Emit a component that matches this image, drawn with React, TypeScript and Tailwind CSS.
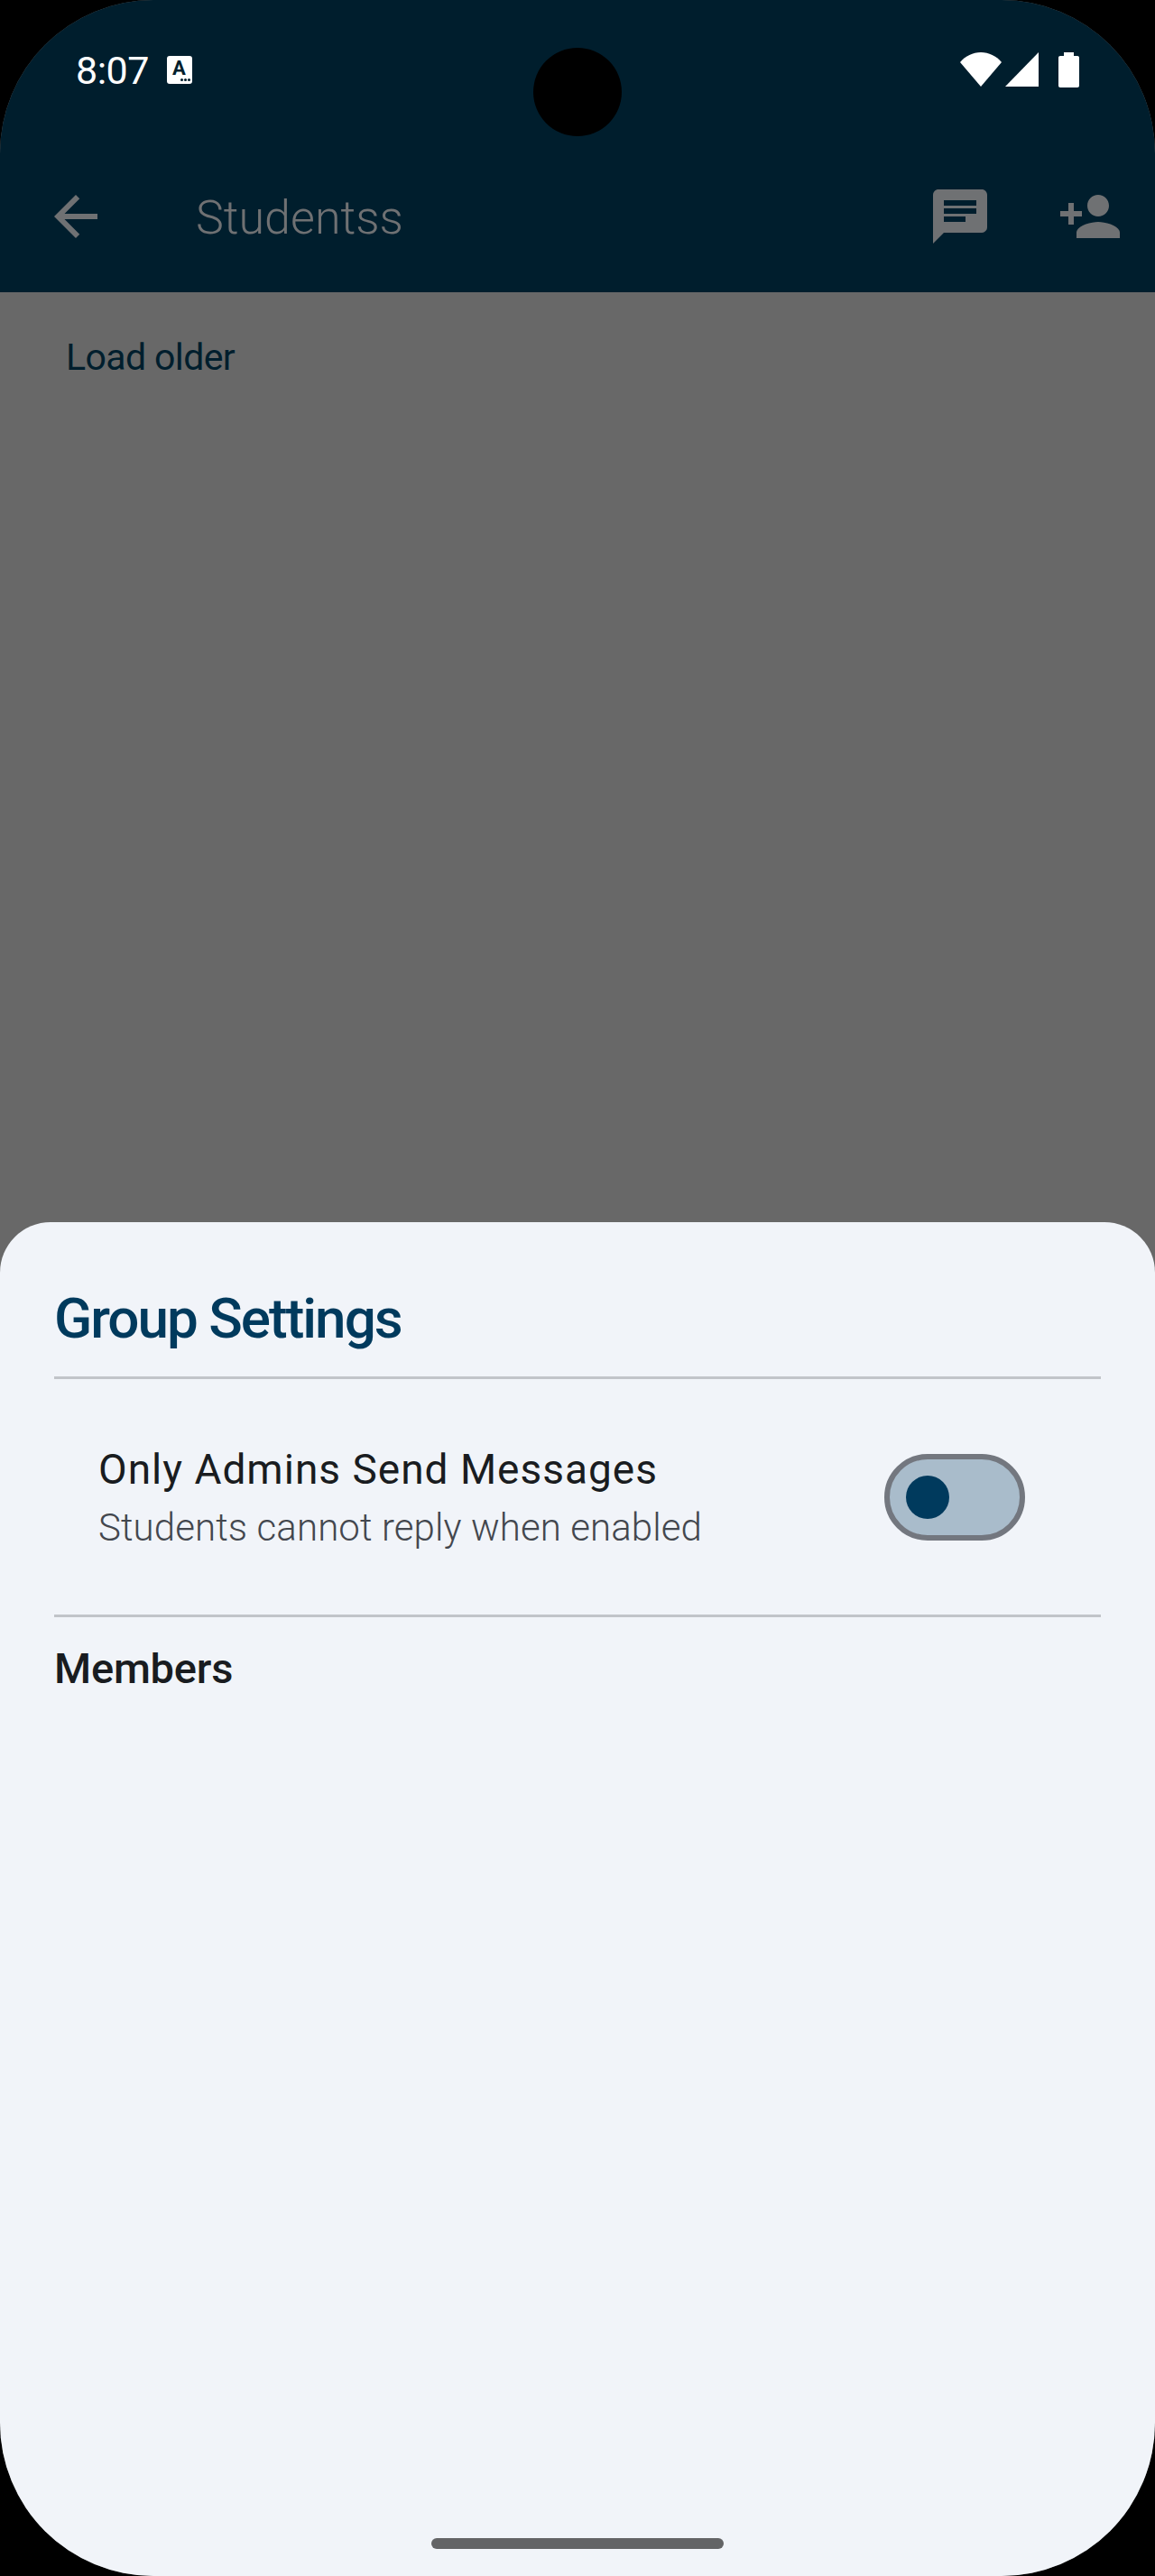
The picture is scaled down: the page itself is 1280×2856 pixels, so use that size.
const font = "[font-family:Roboto,'Noto_Sans',sans-serif]"

function Wifi() {
  return (
    <svg width="46" height="38" viewBox="0 0 46 38" className="fill-white">
      <path d="M23 38 0 11C6 4 14 0 23 0s17 4 23 11L23 38Z" />
    </svg>
  )
}

function Signal() {
  return (
    <svg width="37" height="38" viewBox="0 0 37 38" className="fill-white">
      <path d="M37 0v38H0L37 0Z" />
    </svg>
  )
}

function Battery() {
  return (
    <svg width="23" height="39" viewBox="0 0 23 39" className="fill-white">
      <path d="M6 0h11v4h4c1.200 0 2 .8 2 2v31c0 1.200-.8 2-2 2H2c-1.200 0-2-.8-2-2V6c0-1.200.8-2 2-2h4V0Z" />
    </svg>
  )
}

function ChatIcon() {
  return (
    <svg width="72" height="72" viewBox="0 0 24 24" className="fill-[#6f7173]">
      <path d="M20 2H4c-1.100 0-1.990.9-1.990 2L2 22l4-4h14c1.100 0 2-.9 2-2V4c0-1.100-.9-2-2-2zM6 9h12v2H6V9zm8 5H6v-2h8v2zm4-6H6V6h12v2z" />
    </svg>
  )
}

function PersonAddIcon() {
  return (
    <svg width="72" height="72" viewBox="0 0 24 24" className="fill-[#6f7173]">
      <path d="M15 12c2.210 0 4-1.790 4-4s-1.790-4-4-4-4 1.790-4 4 1.790 4 4 4zm-9-2V7H4v3H1v2h3v3h2v-3h3v-2H6zm9 4c-2.670 0-8 1.340-8 4v2h16v-2c0-2.660-5.330-4-8-4z" />
    </svg>
  )
}

function BackIcon() {
  return (
    <svg width="72" height="72" viewBox="0 0 24 24" className="fill-[#6f7173]">
      <path d="M20 11H7.830l5.590-5.590L12 4l-8 8 8 8 1.410-1.410L7.830 13H20v-2z" />
    </svg>
  )
}

function Toggle() {
  return (
    <div className="flex h-[96px] w-[156px] items-center rounded-full border-[6px] border-[#73777f] bg-[#a9bccb] pl-[18px]">
      <div className="h-[48px] w-[48px] rounded-full bg-[#003a5d]" />
    </div>
  )
}

export default function App() {
  return (
    <div className="h-[2856px] w-[1280px] bg-black">
      <div className={`relative flex h-full flex-col overflow-hidden rounded-[170px] bg-[#686868] ${font}`}>
        {/* camera cutout */}
        <div className="absolute left-[591px] top-[53px] h-[98px] w-[98px] rounded-full bg-black" />

        <header className="h-[324px] shrink-0 bg-[#001e2d]">
          <div className="flex h-[154px] items-center justify-between px-[84px]">
            <div className="flex items-center gap-[20px]">
              <span className="mt-[3px] text-[43px] leading-none tracking-[-0.5px] text-white">8:07</span>
              <div className="relative h-[31px] w-[28px] rounded-[3px] bg-white pl-[6px]">
                <span className="text-[22px] font-bold leading-[27px] text-[#001e2d]">A</span>
                <div className="absolute bottom-[3px] right-[2px] flex gap-[1px]">
                  <div className="h-[3px] w-[3px] rounded-full bg-[#001e2d]" />
                  <div className="h-[3px] w-[3px] rounded-full bg-[#001e2d]" />
                  <div className="h-[3px] w-[3px] rounded-full bg-[#001e2d]" />
                </div>
              </div>
            </div>
            <div className="flex items-center">
              <Wifi />
              <div className="ml-[4px]"><Signal /></div>
              <div className="ml-[22px]"><Battery /></div>
            </div>
          </div>
          <div className="flex h-[172px] items-center pl-[48px] pr-[36px]">
            <BackIcon />
            <span className="ml-[97px] mt-[4px] text-[52px] font-light leading-none text-[#6f7173]">Studentss</span>
            <div className="ml-auto flex gap-[72px]">
              <ChatIcon />
              <PersonAddIcon />
            </div>
          </div>
        </header>

        <div className="h-[1031px] shrink-0 pl-[73px] pt-[42px]">
          <span className="text-[41px] leading-[60px] tracking-[-0.6px] text-[#001e2d]">Load older</span>
        </div>

        <section className="relative flex-1 rounded-t-[56px] bg-[#f1f4f9] px-[60px]">
          <div className="flex h-[174px] items-end border-b-[3px] border-[#c1c4c9] pb-[29px]">
            <h2 className="text-[62px] font-medium leading-[70px] tracking-[-2px] text-[#003a5d]">Group Settings</h2>
          </div>
          <div className="flex h-[264px] items-center justify-between border-b-[3px] border-[#c1c4c9] pl-[49px] pr-[84px]">
            <div>
              <p className="text-[46px] leading-[60px] tracking-[1px] text-[#191c20]">Only Admins Send Messages</p>
              <p className="mt-[8px] text-[42px] font-light leading-[54px] tracking-[0.1px] text-[#43474e]">Students cannot reply when enabled</p>
            </div>
            <Toggle />
          </div>
          <h3 className="mt-[27px] text-[47px] font-medium leading-[60px] tracking-[-0.2px] text-[#191c20]">Members</h3>
          <div className="absolute bottom-[30px] left-[478px] h-[12px] w-[324px] rounded-full bg-[#636466]" />
        </section>
      </div>
    </div>
  )
}
